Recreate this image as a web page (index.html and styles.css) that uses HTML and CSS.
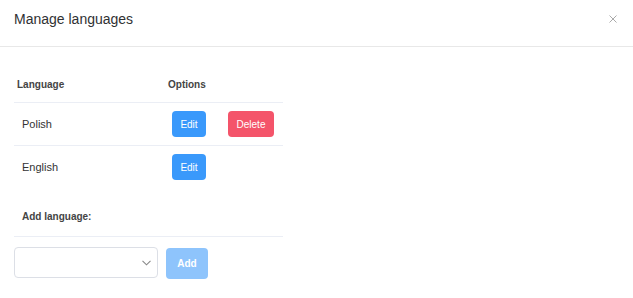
FILE: index.html
```html
<!DOCTYPE html>
<html>
<head>
  <meta charset="UTF-8">
  <title>Manage languages</title>
  <link rel="stylesheet" href="styles.css">
</head>
<body>
  <div class="dialog-header">
    <span class="dialog-title">Manage languages</span>
    <button class="close-btn" aria-label="Close">
      <svg width="8" height="8" viewBox="0 0 8 8">
        <path d="M0.5 0.5 L7.5 7.5 M7.5 0.5 L0.5 7.5" stroke="#aaa" stroke-width="1" fill="none"/>
      </svg>
    </button>
  </div>

  <div class="dialog-body">
    <div class="lang-table">
      <div class="lang-row head">
        <div class="col-name">Language</div>
        <div class="col-options">Options</div>
      </div>
      <div class="lang-row">
        <div class="col-name">Polish</div>
        <div class="col-options">
          <button class="btn btn-primary">Edit</button>
          <button class="btn btn-danger">Delete</button>
        </div>
      </div>
      <div class="lang-row last">
        <div class="col-name">English</div>
        <div class="col-options">
          <button class="btn btn-primary">Edit</button>
        </div>
      </div>
    </div>

    <div class="add-title">Add language:</div>

    <div class="add-form">
      <div class="select">
        <svg class="chevron" width="9" height="6" viewBox="0 0 9 6">
          <path d="M0.5 0.8 L4.5 4.8 L8.5 0.8" stroke="#888" stroke-width="1.1" fill="none"/>
        </svg>
      </div>
      <button class="btn btn-add" disabled>Add</button>
    </div>
  </div>
</body>
</html>
```

FILE: styles.css
```css
body {
  margin: 0;
  background-color: #fff;
  font-family: "Liberation Sans", Arial, sans-serif;
  color: #333;
}

.dialog-header {
  height: 46px;
  border-bottom: 1px solid #e8e8e8;
  display: flex;
  align-items: center;
  justify-content: space-between;
  padding: 0 16px 0 14px;
}
.dialog-title {
  font-size: 14px;
  color: #303133;
  margin-top: -9px;
}
.close-btn {
  border: none;
  background: none;
  padding: 0;
  display: flex;
  margin-top: -8px;
}

.dialog-body {
  padding: 19px 0 0 14px;
}

.lang-table {
  width: 269px;
}
.lang-row {
  display: flex;
  align-items: center;
  height: 42px;
  border-bottom: 1px solid #ebeef5;
  font-size: 11px;
  color: #333;
}
.lang-row.head {
  height: 36px;
  font-size: 10px;
  font-weight: bold;
  color: #444;
}
.lang-row.last {
  border-bottom: none;
}
.col-name {
  width: 150px;
  padding-left: 8px;
}
.lang-row.head .col-name {
  width: 151px;
  padding-left: 3px;
}
.col-options {
  display: flex;
  gap: 22px;
}

.btn {
  font-family: "Liberation Sans", Arial, sans-serif;
  font-size: 10px;
  color: #fff;
  border: none;
  border-radius: 4px;
  height: 26px;
  padding: 0;
}
.btn-primary {
  width: 34px;
  background-color: #3a99fb;
}
.btn-danger {
  width: 46px;
  background-color: #f4546a;
}

.add-title {
  width: 261px;
  height: 40px;
  margin-top: 8px;
  padding-left: 8px;
  display: flex;
  align-items: center;
  border-bottom: 1px solid #ebeef5;
  font-size: 10px;
  font-weight: bold;
  color: #444;
}

.add-form {
  display: flex;
  gap: 8px;
  margin-top: 10px;
  align-items: flex-start;
}
.select {
  width: 141px;
  height: 29px;
  border: 1px solid #dcdfe6;
  border-radius: 4px;
  display: flex;
  align-items: center;
  justify-content: flex-end;
  padding-right: 1px;
}
.chevron {
  margin-right: 5px;
}
.btn-add {
  width: 42px;
  height: 31px;
  margin-top: 1px;
  background-color: #8ec4fc;
  font-weight: bold;
}
```
